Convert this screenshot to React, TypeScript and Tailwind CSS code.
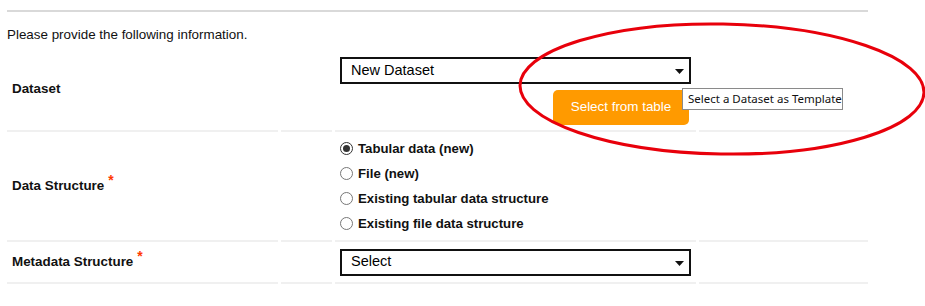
import React from "react";

const font = { fontFamily: '"Liberation Sans", Arial, sans-serif' };

function Caret() {
  return (
    <svg width="9" height="5" viewBox="0 0 9 5" className="absolute right-[5px] top-[10px]">
      <path d="M0 0 L9 0 L4.5 5 Z" fill="#111" />
    </svg>
  );
}

function SelectBox({ value }: { value: string }) {
  return (
    <div className="relative w-[351px] h-[27px] border-2 border-[#111] bg-white pl-[9px] flex items-center text-[14.5px] text-black">
      {value}
      <Caret />
    </div>
  );
}

function Radio({ label, checked }: { label: string; checked?: boolean }) {
  return (
    <div className="flex items-center h-[25px] gap-[5px]">
      <span
        className={
          "w-[13px] h-[13px] rounded-full border flex items-center justify-center bg-white " +
          (checked ? "border-[#333]" : "border-[#777]")
        }
      >
        {checked && <span className="w-[7px] h-[7px] rounded-full bg-[#333]" />}
      </span>
      <span className="font-bold text-[13.2px] text-[#111]">{label}</span>
    </div>
  );
}

function Req() {
  return <span className="text-[#ff3a00] text-[14px] font-bold relative -top-[6px] ml-[4px]">*</span>;
}

export default function App() {
  return (
    <div className="relative w-[925px] h-[306px] bg-white overflow-hidden" style={font}>
      <div className="ml-[7px] w-[861px] pt-[10px]">
        <div className="h-[2px] bg-[#d9d9d9]" />
        <div className="mt-[15px] text-[13.4px] text-[#111] leading-[16px]">Please provide the following information.</div>

        <div className="mt-[5px] grid grid-cols-[271px_51px_361px_169px] gap-x-[3px]">
          {/* Dataset */}
          <div className="h-[84px] border-b-2 border-[#f0f0f0] pl-[5px] flex items-center font-bold text-[13.4px] text-[#111]">
            Dataset
          </div>
          <div className="border-b-2 border-[#f0f0f0]" />
          <div className="border-b-2 border-[#f0f0f0] pl-[5px] pt-[9px]">
            <SelectBox value="New Dataset" />
            <div className="flex justify-end pr-[7px] mt-[6px]">
              <div className="w-[136px] h-[35px] rounded-[5px] bg-[#ff9a00] text-white text-[13.4px] flex items-center justify-center">
                Select from table
              </div>
            </div>
          </div>
          <div className="border-b-2 border-[#f0f0f0]" />

          {/* Data Structure */}
          <div className="h-[110px] border-b-2 border-[#f0f0f0] pl-[5px] flex items-center font-bold text-[13.4px] text-[#111]">
            Data Structure
            <Req />
          </div>
          <div className="border-b-2 border-[#f0f0f0]" />
          <div className="border-b-2 border-[#f0f0f0] pl-[5px] pt-[4px]">
            <Radio label="Tabular data (new)" checked />
            <Radio label="File (new)" />
            <Radio label="Existing tabular data structure" />
            <Radio label="Existing file data structure" />
          </div>
          <div className="border-b-2 border-[#f0f0f0]" />

          {/* Metadata Structure */}
          <div className="h-[42px] border-b-2 border-[#f0f0f0] pl-[5px] flex items-center font-bold text-[13.4px] text-[#111]">
            Metadata Structure
            <Req />
          </div>
          <div className="border-b-2 border-[#f0f0f0]" />
          <div className="border-b-2 border-[#f0f0f0] pl-[5px] flex items-center">
            <SelectBox value="Select" />
          </div>
          <div className="border-b-2 border-[#f0f0f0]" />
        </div>
      </div>

      {/* tooltip */}
      <div
        className="absolute left-[682px] top-[88px] w-[161px] h-[22px] border border-[#8a8a8a] bg-white flex items-center pl-[5px] text-[11.5px] text-[#111] whitespace-nowrap"
        style={{ fontFamily: '"Noto Sans", "Open Sans", sans-serif' }}
      >
        Select a Dataset as Template
      </div>

      {/* red annotation ellipse */}
      <svg className="absolute left-0 top-0 pointer-events-none" width="925" height="306">
        <ellipse cx="722" cy="89" rx="202" ry="65" fill="none" stroke="#e8000b" strokeWidth="3" transform="rotate(1 722 89)" />
      </svg>
    </div>
  );
}
